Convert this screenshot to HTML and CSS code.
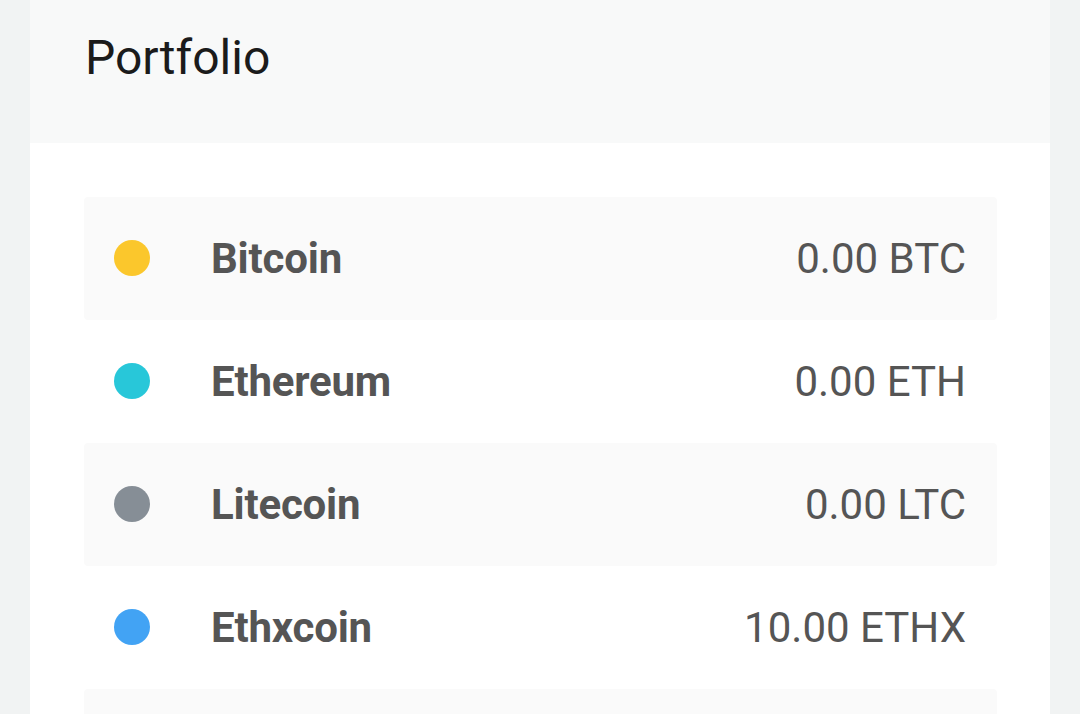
FILE: index.html
```html
<!DOCTYPE html>
<html>
<head>
<meta charset="utf-8">
<link rel="stylesheet" href="styles.css">
</head>
<body>
<div class="page">
  <div class="card">
    <div class="card-header"><h1 class="title">Portfolio</h1></div>
    <div class="card-body">
      <div class="row alt"><span class="dot yellow"></span><span class="name">Bitcoin</span><span class="value">0.00 BTC</span></div>
      <div class="row"><span class="dot teal"></span><span class="name">Ethereum</span><span class="value">0.00 ETH</span></div>
      <div class="row alt"><span class="dot grey"></span><span class="name">Litecoin</span><span class="value">0.00 LTC</span></div>
      <div class="row"><span class="dot blue"></span><span class="name">Ethxcoin</span><span class="value">10.00 ETHX</span></div>
      <div class="row alt"></div>
    </div>
  </div>
</div>
</body>
</html>
```
FILE: styles.css
```css
html, body {
  margin: 0;
  padding: 0;
  height: 100%;
  overflow: hidden;
}
body {
  background: #f1f3f3;
  font-family: Roboto, "Noto Sans", sans-serif;
}
.page {
  padding: 0 30px;
}
.card {
  background: #ffffff;
}
.card-header {
  background: #f8f9f9;
  height: 143px;
  padding: 0 55px;
  box-sizing: border-box;
}
.title {
  margin: 0;
  padding-top: 26px;
  font-size: 48px;
  font-weight: 400;
  line-height: 64px;
  color: #1b1b1b;
}
.card-body {
  padding: 54px 53px 0 54px;
}
.row {
  display: flex;
  align-items: center;
  height: 123px;
  padding: 0 31px 0 30px;
  border-radius: 4px;
  color: #555555;
  font-size: 42px;
}
.row.alt {
  background: #fafafa;
}
.dot {
  width: 36px;
  height: 36px;
  border-radius: 50%;
  flex: none;
  margin-top: -2px;
}
.yellow { background: #fbc72c; }
.teal { background: #28c7d9; }
.grey { background: #868e96; }
.blue { background: #42a3f4; }
.name {
  margin-left: 61px;
  font-weight: 700;
  letter-spacing: -0.2px;
  flex: 1;
}
.value {
  font-weight: 400;
}
```
